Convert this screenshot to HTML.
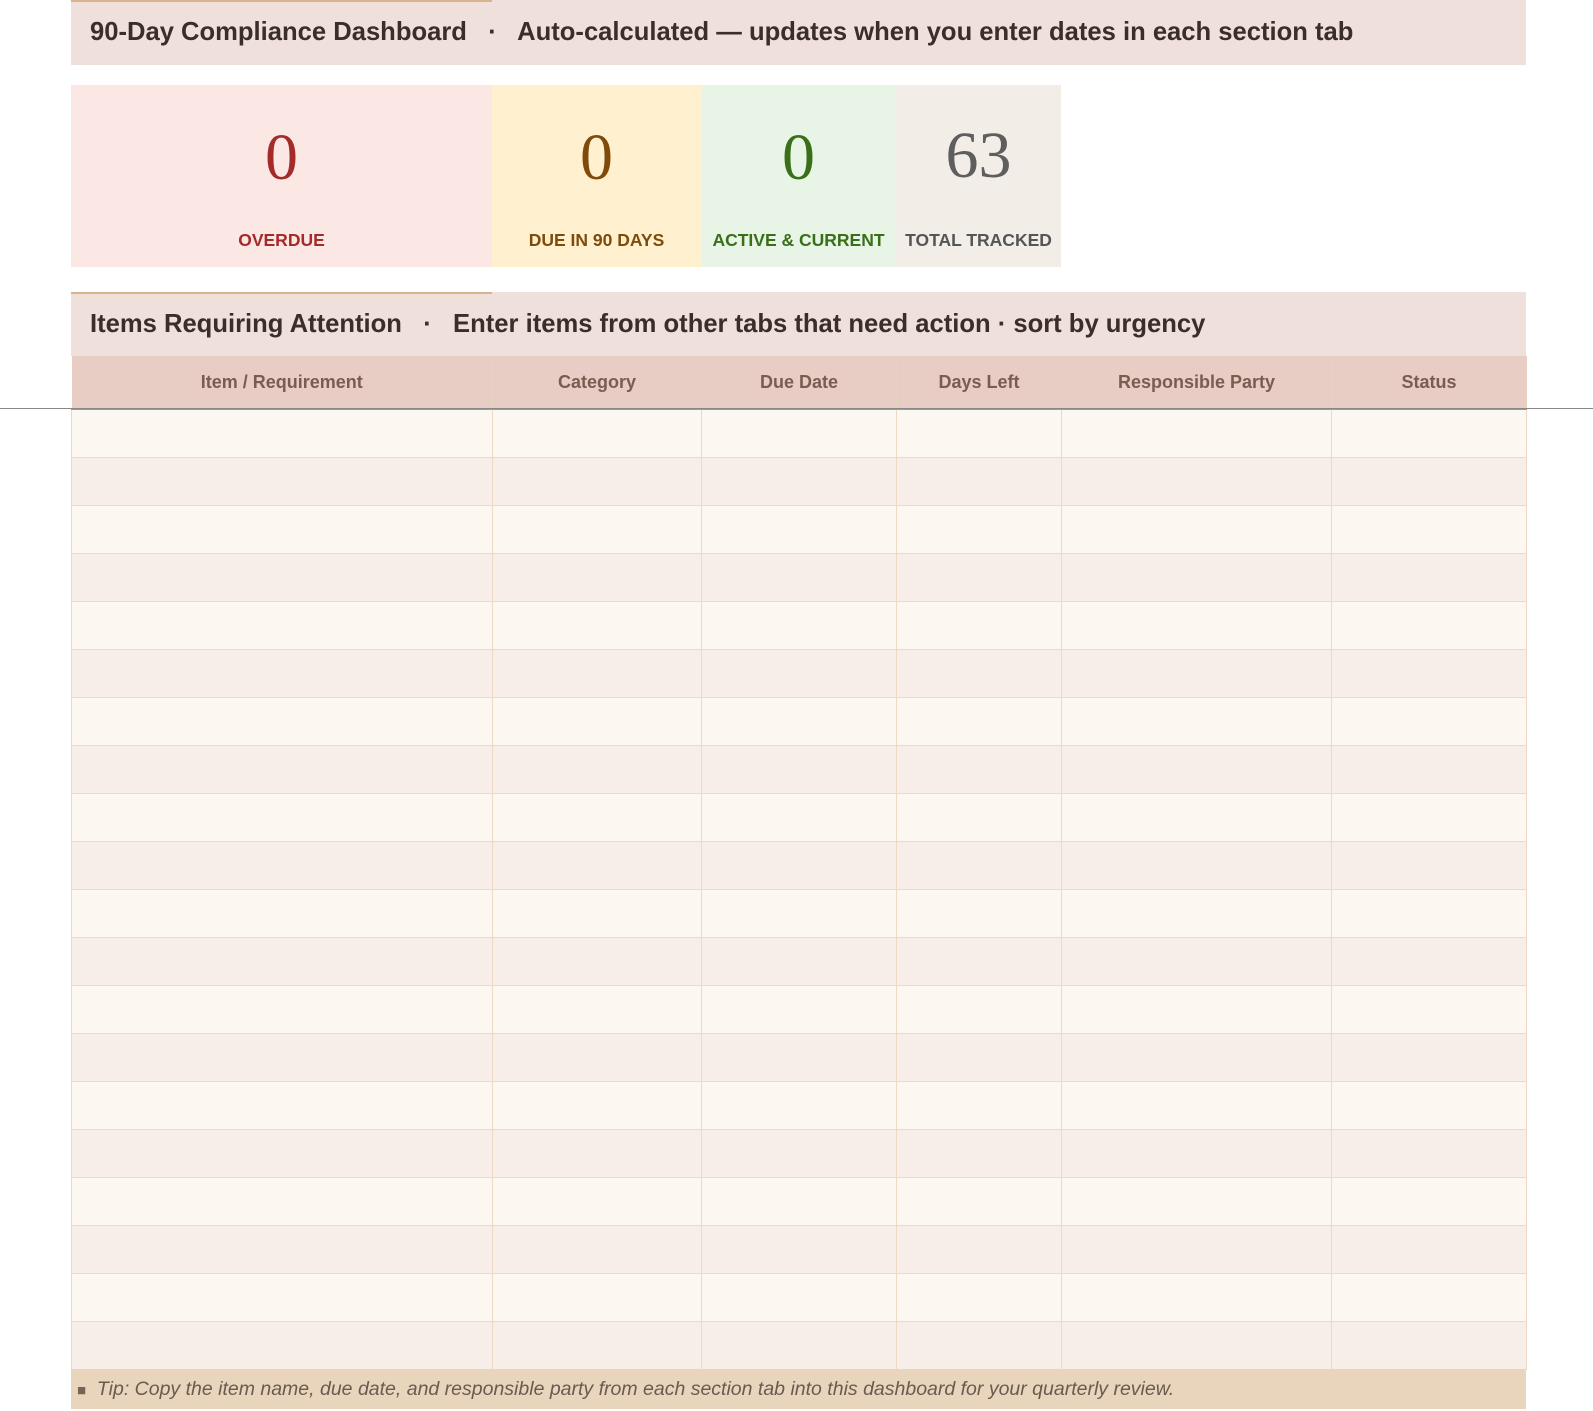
<!DOCTYPE html>
<html><head><meta charset="utf-8"><style>
*{margin:0;padding:0;box-sizing:border-box}
body{width:1593px;height:1409px;background:#fff;position:relative;overflow:hidden;font-family:"Liberation Sans",sans-serif}
.bar{position:absolute;left:71px;width:1455px;background:#efe0dc;color:#3a2e2a;font-weight:bold;font-size:25.6px;line-height:64px;padding-left:19px;white-space:nowrap}
.bar:before{content:"";position:absolute;left:0;top:0;width:421px;height:2px;background:#d8b48c}
.card{position:absolute;top:85px;height:182px;text-align:center}
.num{position:absolute;left:0;right:0;font-family:"Liberation Serif",serif;font-size:66px;line-height:1}
.lab{position:absolute;left:0;right:0;font-size:17.5px;font-weight:bold;line-height:22px;white-space:nowrap}
table{position:absolute;left:71px;top:356px;border-collapse:collapse;width:1455px;table-layout:fixed}
th{height:53px;background:#e8cdc5;color:#7a5d50;font-size:18px;font-weight:bold;border-right:1px solid #e6d2c0;border-bottom:2px solid #999}
td{height:48px;border:1px solid #efd9c2}
tr:nth-child(even) td{background:#fdf7f2}
tr:nth-child(odd) td{background:#f7eeea}
.line{position:absolute;left:0;width:1593px;top:408px;height:1px;background:#888}
.tip{position:absolute;left:71px;top:1369px;width:1455px;height:40px;background:#e8d5bb;color:#6b5a52;font-style:italic;font-size:19.5px;line-height:40px;padding-left:6px;white-space:nowrap}
</style></head><body>
<div class="bar" style="top:0;height:65px">90-Day Compliance Dashboard &nbsp;&nbsp;·&nbsp;&nbsp; Auto-calculated — updates when you enter dates in each section tab</div>

<div class="card" style="left:71px;width:421px;background:#fbe8e5"><div class="num" style="top:40px;color:#a52a2a">0</div><div class="lab" style="top:144px;color:#a52a2a">OVERDUE</div></div>
<div class="card" style="left:492px;width:209px;background:#fff1cf"><div class="num" style="top:40px;color:#7f4a0a">0</div><div class="lab" style="top:144px;color:#7f4a0a">DUE IN 90 DAYS</div></div>
<div class="card" style="left:701px;width:195px;background:#e8f4e6"><div class="num" style="top:40px;color:#3a6f1a">0</div><div class="lab" style="top:144px;color:#3a6f1a">ACTIVE &amp; CURRENT</div></div>
<div class="card" style="left:896px;width:165px;background:#f2ede6"><div class="num" style="top:38px;color:#5e5e5e">63</div><div class="lab" style="top:144px;color:#555">TOTAL TRACKED</div></div>

<div class="bar" style="top:292px;height:64px">Items Requiring Attention &nbsp;&nbsp;·&nbsp;&nbsp; Enter items from other tabs that need action · sort by urgency</div>

<table>
<colgroup><col style="width:421px"><col style="width:209px"><col style="width:195px"><col style="width:165px"><col style="width:270px"><col style="width:195px"></colgroup>
<tr><th>Item / Requirement</th><th>Category</th><th>Due Date</th><th>Days Left</th><th>Responsible Party</th><th>Status</th></tr>
<tr><td></td><td></td><td></td><td></td><td></td><td></td></tr>
<tr><td></td><td></td><td></td><td></td><td></td><td></td></tr>
<tr><td></td><td></td><td></td><td></td><td></td><td></td></tr>
<tr><td></td><td></td><td></td><td></td><td></td><td></td></tr>
<tr><td></td><td></td><td></td><td></td><td></td><td></td></tr>
<tr><td></td><td></td><td></td><td></td><td></td><td></td></tr>
<tr><td></td><td></td><td></td><td></td><td></td><td></td></tr>
<tr><td></td><td></td><td></td><td></td><td></td><td></td></tr>
<tr><td></td><td></td><td></td><td></td><td></td><td></td></tr>
<tr><td></td><td></td><td></td><td></td><td></td><td></td></tr>
<tr><td></td><td></td><td></td><td></td><td></td><td></td></tr>
<tr><td></td><td></td><td></td><td></td><td></td><td></td></tr>
<tr><td></td><td></td><td></td><td></td><td></td><td></td></tr>
<tr><td></td><td></td><td></td><td></td><td></td><td></td></tr>
<tr><td></td><td></td><td></td><td></td><td></td><td></td></tr>
<tr><td></td><td></td><td></td><td></td><td></td><td></td></tr>
<tr><td></td><td></td><td></td><td></td><td></td><td></td></tr>
<tr><td></td><td></td><td></td><td></td><td></td><td></td></tr>
<tr><td></td><td></td><td></td><td></td><td></td><td></td></tr>
<tr><td></td><td></td><td></td><td></td><td></td><td></td></tr>
</table>
<div class="line"></div>
<div class="tip"><span style="font-style:normal;font-size:15px;color:#7a6258">■</span>&nbsp; Tip: Copy the item name, due date, and responsible party from each section tab into this dashboard for your quarterly review.</div>
</body></html>
